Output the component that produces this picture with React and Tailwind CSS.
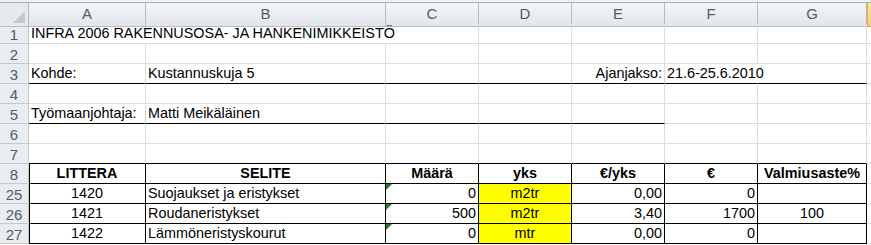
import React from 'react';

const GRID = '#dadcdd';
const COLS = ['A', 'B', 'C', 'D', 'E', 'F', 'G'];
const TEMPLATE = 'grid grid-cols-[29px_117px_240px_93px_93px_93px_93px_109px_1fr]';

// b: bottom edge black, r: right edge black, hideR: no gridline (text overflows)
const sheet = [
  { n: 1, cells: { A: { t: 'INFRA 2006 RAKENNUSOSA- JA HANKENIMIKKEISTÖ', hideR: true }, B: { hideR: true } } },
  { n: 2, cells: {} },
  {
    n: 3,
    cells: {
      A: { t: 'Kohde:', b: true }, B: { t: 'Kustannuskuja 5', b: true }, C: { b: true }, D: { b: true },
      E: { t: 'Ajanjakso:', align: 'right', b: true }, F: { t: '21.6-25.6.2010', b: true, hideR: true }, G: { b: true },
    },
  },
  { n: 4, cells: {} },
  {
    n: 5,
    cells: {
      A: { t: 'Työmaanjohtaja:', b: true }, B: { t: 'Matti Meikäläinen', b: true }, C: { b: true }, D: { b: true }, E: { b: true },
    },
  },
  { n: 6, cells: {} },
  { n: 7, cells: Object.fromEntries(COLS.map(c => [c, { b: true }])) },
];

const tableHead = ['LITTERA', 'SELITE', 'Määrä', 'yks', '€/yks', '€', 'Valmiusaste%'];
const tableRows = [
  { n: 25, v: ['1420', 'Suojaukset ja eristykset', '0', 'm2tr', '0,00', '0', ''] },
  { n: 26, v: ['1421', 'Roudaneristykset', '500', 'm2tr', '3,40', '1700', '100'] },
  { n: 27, v: ['1422', 'Lämmöneristyskourut', '0', 'mtr', '0,00', '0', ''] },
];
const tableAlign = ['center', 'left', 'right', 'center', 'right', 'right', 'center'];

function RowHeader({ n }) {
  return (
    <div className="h-5 flex items-center justify-center bg-[#e9ecf0] border-r border-b border-[#c3c8d0] text-[15px] leading-none text-[#555b63] pt-[1px]">
      {n}
    </div>
  );
}

function Cell({ t, align = 'left', b, r, hideR, bold, bg, left, tri }) {
  const justify = align === 'right' ? 'justify-end' : align === 'center' ? 'justify-center' : 'justify-start';
  return (
    <div
      className={`relative h-5 flex items-end ${justify} pl-[2px] pr-[2px] pb-[2px] whitespace-nowrap overflow-visible border-b border-r text-[14.4px] leading-[16px] text-black ${bold ? 'font-bold' : ''} ${left ? 'shadow-[inset_1px_0_0_#000]' : ''}`}
      style={{
        borderBottomColor: b ? '#000' : GRID,
        borderRightColor: r ? '#000' : hideR ? 'transparent' : GRID,
        backgroundColor: bg || 'transparent',
      }}
    >
      {tri && (
        <svg className="absolute left-0 top-0" width="6" height="6" viewBox="0 0 6 6">
          <polygon points="0,0 6,0 0,6" fill="#1f7a2e" />
        </svg>
      )}
      {t && <span className="relative">{t}</span>}
    </div>
  );
}

export default function App() {
  return (
    <div className="w-[871px] h-[245px] overflow-hidden bg-white font-['Liberation_Sans',Arial,sans-serif]">
      {/* strip under the formula bar */}
      <div className="h-[3px] bg-[#eef0f3] border-b border-[#a7afb9]" />

      {/* column letters */}
      <div className={`${TEMPLATE} h-[21px]`}>
        <div className="relative bg-[#e6e9ee] border-r border-b border-[#b5bcc6]">
          <svg className="absolute right-[3px] bottom-[3px]" width="12" height="12" viewBox="0 0 12 12">
            <polygon points="12,0 12,12 0,12" fill="#c4c9d0" />
          </svg>
        </div>
        {COLS.map(c => (
          <div
            key={c}
            className="flex items-center justify-center bg-gradient-to-b from-[#f3f5f7] to-[#e2e6eb] border-r border-b border-[#b5bcc6] text-[15px] text-[#555b63]"
          >
            {c}
          </div>
        ))}
        <div className="bg-gradient-to-b from-[#fbe3a7] to-[#f6cf7c] border-l border-[#f0a43a] border-b border-b-[#d8a44a]" />
      </div>

      {sheet.map(row => (
        <div key={row.n} className={TEMPLATE}>
          <RowHeader n={row.n} />
          {COLS.map(c => (
            <Cell key={c} {...(row.cells[c] || {})} />
          ))}
          <Cell />
        </div>
      ))}

      {/* LITTERA table */}
      <div className={TEMPLATE}>
        <RowHeader n={8} />
        {tableHead.map((h, i) => (
          <Cell key={h} t={h} bold align="center" b r left={i === 0} />
        ))}
        <Cell />
      </div>
      {tableRows.map(row => (
        <div key={row.n} className={TEMPLATE}>
          <RowHeader n={row.n} />
          {row.v.map((v, i) => (
            <Cell
              key={i}
              t={v}
              align={tableAlign[i]}
              b
              r
              left={i === 0}
              tri={i === 2}
              bg={i === 3 ? '#ffff00' : undefined}
            />
          ))}
          <Cell />
        </div>
      ))}
    </div>
  );
}
